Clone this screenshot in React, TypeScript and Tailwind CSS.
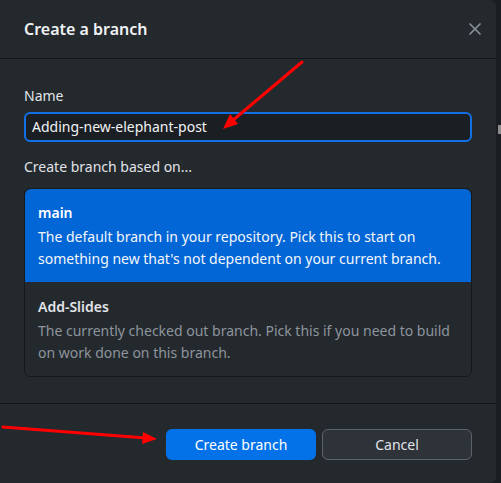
import { X } from "lucide-react";

const font = { fontFamily: '"Noto Sans", "Open Sans", sans-serif' };

const branches = [
  {
    name: "main",
    description:
      "The default branch in your repository. Pick this to start on something new that's not dependent on your current branch.",
    selected: true,
  },
  {
    name: "Add-Slides",
    description:
      "The currently checked out branch. Pick this if you need to build on work done on this branch.",
    selected: false,
  },
];

export default function App() {
  return (
    <div
      className="relative flex h-[483px] w-[501px] overflow-hidden bg-[#1a1d21] text-[14px] text-[#e1e4e8]"
      style={font}
    >
      {/* Dialog */}
      <div className="flex w-[496px] flex-col rounded-r-[6px] bg-[#24292e]">
        {/* Header */}
        <div className="flex h-[59px] items-center justify-between border-b border-[#141619] pl-[24px] pr-[11px]">
          <h1 className="text-[16px] font-semibold text-[#f0f2f4]">Create a branch</h1>
          <X className="h-[20px] w-[20px] text-[#8b9198]" strokeWidth={2} />
        </div>

        {/* Body */}
        <div className="flex flex-col px-[24px] pb-[26px] pt-[27px]">
          <label className="leading-[20px]">Name</label>
          <div className="mt-[6px] flex h-[30px] items-center rounded-[6px] border-2 border-[#1170e3] bg-[#1b1f23] px-[6px] leading-[20px] text-[#f0f2f4]">
            Adding-new-elephant-post
          </div>

          <div className="mt-[15px] leading-[20px]">Create branch based on...</div>

          <div className="mt-[11px] flex flex-col rounded-[6px] border border-[#16191c]">
            {branches.map((b) => (
              <div
                key={b.name}
                className={
                  b.selected
                    ? "rounded-t-[6px] bg-[#0366d6] px-[13px] pb-[12px] pt-[14px] text-white"
                    : "px-[13px] pb-[12px] pt-[15px]"
                }
              >
                <div className="font-semibold leading-[20px]">{b.name}</div>
                <div
                  className={
                    b.selected
                      ? "mt-[3px] leading-[22px] text-[#f3f6fa]"
                      : "mt-[3px] leading-[22px] text-[#8d949c]"
                  }
                >
                  {b.description}
                </div>
              </div>
            ))}
          </div>
        </div>

        {/* Footer */}
        <div className="flex flex-1 items-start justify-end gap-[6px] border-t border-[#141619] pr-[24px] pt-[25px]">
          <button className="h-[31px] w-[150px] rounded-[6px] bg-[#0372e8] text-[14px] text-white">
            Create branch
          </button>
          <button className="h-[31px] w-[150px] rounded-[6px] border border-[#5d636a] bg-[#2e333a] text-[14px] text-[#e1e4e8]">
            Cancel
          </button>
        </div>
      </div>

      {/* Scrollbar marker at right edge */}
      <div className="absolute right-0 top-[125px] h-[9px] w-[3px] bg-[#8d8d8d]" />

      {/* Annotation arrows */}
      <svg className="pointer-events-none absolute left-0 top-0" width="501" height="483">
        <g stroke="#ff0000" strokeWidth="3" strokeLinecap="round" fill="#ff0000">
          <line x1="302" y1="62" x2="232" y2="121" />
          <polygon points="223,129 230,114 238,124" stroke="none" />
          <line x1="3" y1="427" x2="146" y2="438" />
          <polygon points="157,439 143,432 142,444" stroke="none" />
        </g>
      </svg>
    </div>
  );
}
